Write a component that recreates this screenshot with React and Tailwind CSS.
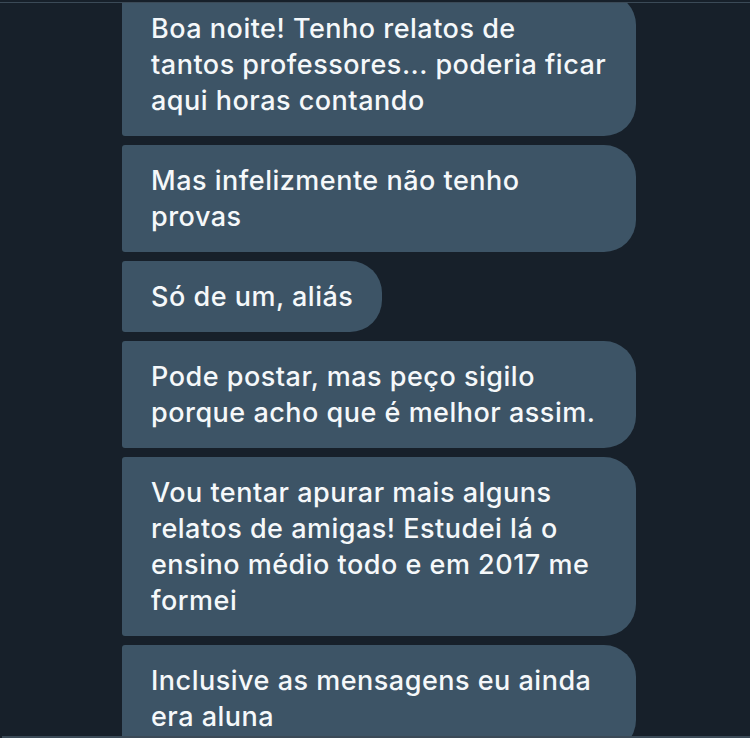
import React from 'react';

const messages = [
  ['Boa noite! Tenho relatos de', 'tantos professores... poderia ficar', 'aqui horas contando'],
  ['Mas infelizmente não tenho', 'provas'],
  ['Só de um, aliás'],
  ['Pode postar, mas peço sigilo', 'porque acho que é melhor assim.'],
  ['Vou tentar apurar mais alguns', 'relatos de amigas! Estudei lá o', 'ensino médio todo e em 2017 me', 'formei'],
  ['Inclusive as mensagens eu ainda', 'era aluna'],
];

export default function App() {
  return (
    <div
      className="w-[750px] h-[738px] bg-[#17202a] overflow-hidden flex flex-col"
      style={{ fontFamily: 'Inter, Roboto, "Noto Sans", sans-serif' }}
    >
      <div className="h-[2px] shrink-0" />
      <div className="h-[1px] shrink-0 bg-[#3b4a57]" />
      {/* Conversation */}
      <div className="flex-1 overflow-hidden pl-[122px]">
        <div className="flex flex-col items-start gap-[9px] -mt-[10px]">
          {messages.map((lines, i) => (
            <div
              key={i}
              className={
                (lines.length > 1 ? 'w-[514px] ' : '') +
                'bg-[#3d5466] rounded-r-[32px] rounded-l-[3px] pl-[29px] pr-[29px] py-[17.5px] text-[27px] leading-[36px] tracking-[0.5px] font-medium text-[#f5f8fa] whitespace-nowrap'
              }
            >
              {lines.map((l, j) => (
                <div key={j}>{l}</div>
              ))}
            </div>
          ))}
        </div>
      </div>
      <div className="h-[2px] shrink-0 bg-[#3b4a57] ml-[2px]" />
    </div>
  );
}
